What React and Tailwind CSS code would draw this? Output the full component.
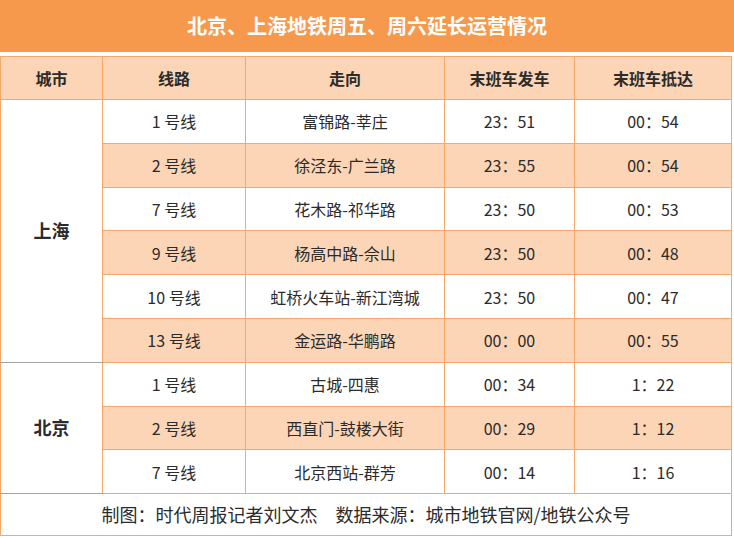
import React from "react";

const rows = [
  { city: "上海", span: 6, line: "1 号线", route: "富锦路-莘庄", dep: "23：51", arr: "00：54" },
  { line: "2 号线", route: "徐泾东-广兰路", dep: "23：55", arr: "00：54" },
  { line: "7 号线", route: "花木路-祁华路", dep: "23：50", arr: "00：53" },
  { line: "9 号线", route: "杨高中路-佘山", dep: "23：50", arr: "00：48" },
  { line: "10 号线", route: "虹桥火车站-新江湾城", dep: "23：50", arr: "00：47" },
  { line: "13 号线", route: "金运路-华鹏路", dep: "00：00", arr: "00：55" },
  { city: "北京", span: 3, line: "1 号线", route: "古城-四惠", dep: "00：34", arr: "1：22" },
  { line: "2 号线", route: "西直门-鼓楼大街", dep: "00：29", arr: "1：12" },
  { line: "7 号线", route: "北京西站-群芳", dep: "00：14", arr: "1：16" },
];

const cell = "border border-[#f6a868] text-center align-middle";

export default function App() {
  return (
    <div
      className="w-[734px] h-[538px] bg-white text-[#2b2b2b] overflow-hidden"
      style={{ fontFamily: '"Noto Sans CJK SC", "Noto Sans", sans-serif' }}
    >
      <div className="h-[52px] bg-[#f6994d] flex items-center justify-center text-white text-[20px] font-bold">
        北京、上海地铁周五、周六延长运营情况
      </div>
      <table className="mt-[4px] w-[731px] table-fixed border-collapse">
        <colgroup>
          <col className="w-[102px]" />
          <col className="w-[143px]" />
          <col className="w-[199px]" />
          <col className="w-[130px]" />
          <col className="w-[157px]" />
        </colgroup>
        <thead>
          <tr className="h-[43px] bg-[#fcd5b6] text-[16px] font-bold">
            <th className={cell}>城市</th>
            <th className={cell}>线路</th>
            <th className={cell}>走向</th>
            <th className={cell}>末班车发车</th>
            <th className={cell}>末班车抵达</th>
          </tr>
        </thead>
        <tbody className="text-[16px]">
          {rows.map((r, i) => (
            <tr key={i} className={`h-[43.8px] ${i % 2 === 1 ? "bg-[#fcd5b6]" : "bg-white"}`}>
              {r.city && (
                <td
                  rowSpan={r.span}
                  className="border border-[#f6a868] border-b-[#a8a29e] bg-white text-center align-middle text-[18px] font-bold"
                >
                  {r.city}
                </td>
              )}
              <td className={cell}>{r.line}</td>
              <td className={cell}>{r.route}</td>
              <td className={cell}>{r.dep}</td>
              <td className={cell}>{r.arr}</td>
            </tr>
          ))}
          <tr className="h-[42px] bg-white">
            <td colSpan={5} className="border border-[#f6a868] border-t-[#a8a29e] text-center text-[18px]">
              制图：时代周报记者刘文杰　数据来源：城市地铁官网/地铁公众号
            </td>
          </tr>
        </tbody>
      </table>
    </div>
  );
}
